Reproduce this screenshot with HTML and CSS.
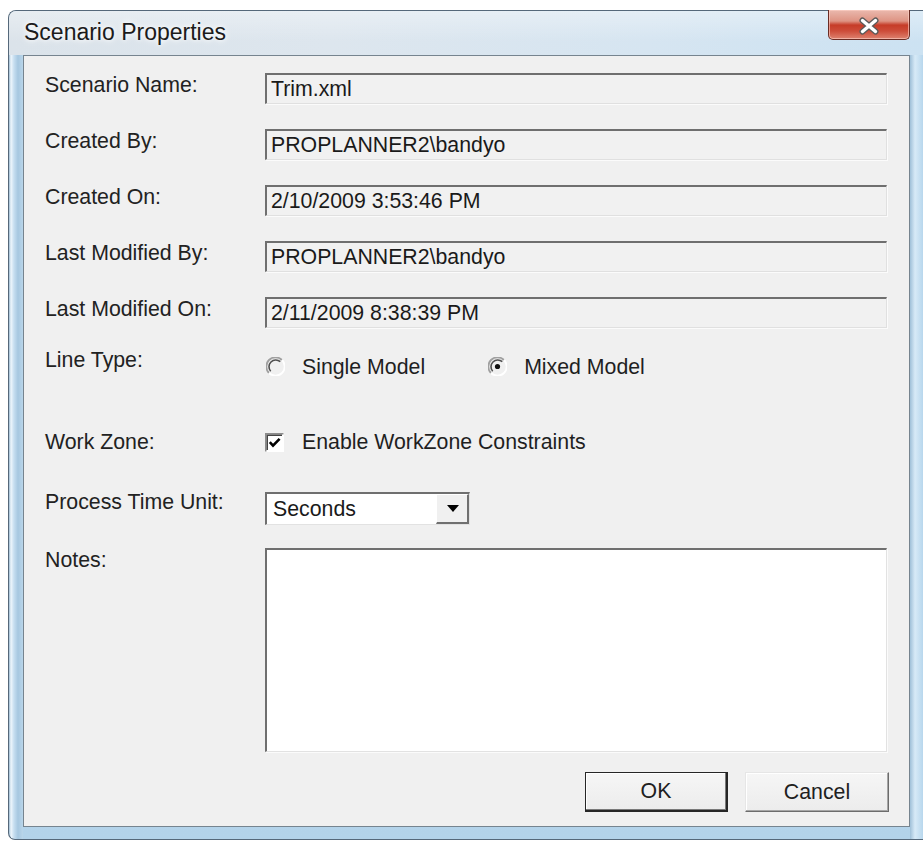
FILE: index.html
```html
<!DOCTYPE html>
<html lang="en">
<head>
<meta charset="utf-8">
<title>Scenario Properties</title>
<link rel="stylesheet" href="styles.css">
</head>
<body>
<div class="window">
  <div class="titlebar">
    <span class="title">Scenario Properties</span>
    <button class="close" type="button" aria-label="Close">
      <svg width="26" height="18" viewBox="0 0 26 18">
        <path d="M6.5 3.5 L19.5 14.5 M19.5 3.5 L6.5 14.5" stroke="#5a5a5a" stroke-width="6" stroke-linecap="round" fill="none"/>
        <path d="M6.5 3.5 L19.5 14.5 M19.5 3.5 L6.5 14.5" stroke="#ffffff" stroke-width="3.4" stroke-linecap="round" fill="none"/>
      </svg>
    </button>
  </div>

  <div class="client">
    <form class="form">
      <div class="row">
        <label class="label" for="f-name">Scenario Name:</label>
        <input class="field" id="f-name" readonly value="Trim.xml">
      </div>
      <div class="row">
        <label class="label" for="f-created-by">Created By:</label>
        <input class="field" id="f-created-by" readonly value="PROPLANNER2\bandyo">
      </div>
      <div class="row">
        <label class="label" for="f-created-on">Created On:</label>
        <input class="field" id="f-created-on" readonly value="2/10/2009 3:53:46 PM">
      </div>
      <div class="row">
        <label class="label" for="f-mod-by">Last Modified By:</label>
        <input class="field" id="f-mod-by" readonly value="PROPLANNER2\bandyo">
      </div>
      <div class="row">
        <label class="label" for="f-mod-on">Last Modified On:</label>
        <input class="field" id="f-mod-on" readonly value="2/11/2009 8:38:39 PM">
      </div>

      <div class="row row-line">
        <span class="label">Line Type:</span>
        <div class="radios">
          <span class="radio">
            <svg class="radio-mark" width="19" height="19" viewBox="0 0 19 19">
              <path d="M16 3 A9 9 0 0 0 3 16" stroke="#a0a0a0" stroke-width="1.8" fill="none"/>
              <path d="M14.3 4.7 A6.8 6.8 0 0 0 4.7 14.3" stroke="#505050" stroke-width="1.6" fill="none"/>
              <path d="M3 16 A9 9 0 0 0 16 3" stroke="#ffffff" stroke-width="1.8" fill="none"/>
            </svg>
            Single Model
          </span>
          <span class="radio">
            <svg class="radio-mark" width="19" height="19" viewBox="0 0 19 19">
              <path d="M16 3 A9 9 0 0 0 3 16" stroke="#a0a0a0" stroke-width="1.8" fill="none"/>
              <path d="M14.3 4.7 A6.8 6.8 0 0 0 4.7 14.3" stroke="#505050" stroke-width="1.6" fill="none"/>
              <path d="M3 16 A9 9 0 0 0 16 3" stroke="#ffffff" stroke-width="1.8" fill="none"/>
              <circle cx="9.5" cy="9.5" r="2.6" fill="#111111"/>
            </svg>
            Mixed Model
          </span>
        </div>
      </div>

      <div class="row row-zone">
        <span class="label">Work Zone:</span>
        <span class="check">
          <svg class="check-mark" width="19" height="19" viewBox="0 0 19 19">
            <rect width="19" height="19" fill="#ffffff"/>
            <path d="M0.75 18.5 V0.75 H18.5" stroke="#8c8c8c" stroke-width="1.5" fill="none"/>
            <path d="M2.25 17 V2.25 H17" stroke="#444444" stroke-width="1.5" fill="none"/>
            <path d="M4.8 9.2 L8 12.6 L14.6 5.8" stroke="#000000" stroke-width="2.6" fill="none"/>
          </svg>
          Enable WorkZone Constraints
        </span>
      </div>

      <div class="row row-unit">
        <span class="label">Process Time Unit:</span>
        <div class="select">
          <span class="select-value">Seconds</span>
          <span class="select-button">
            <svg width="12" height="7" viewBox="0 0 12 7"><path d="M0 0 H12 L6 7 Z" fill="#000000"/></svg>
          </span>
        </div>
      </div>

      <div class="row row-notes">
        <label class="label" for="f-notes">Notes:</label>
        <textarea class="notes" id="f-notes"></textarea>
      </div>
    </form>

    <div class="buttons">
      <button class="btn btn-default" type="button">OK</button>
      <button class="btn" type="button">Cancel</button>
    </div>
  </div>
</div>
</body>
</html>
```

FILE: styles.css
```css
html, body {
  margin: 0;
  padding: 0;
  background: #ffffff;
  overflow: hidden;
}

body {
  font-family: "Liberation Sans", Arial, sans-serif;
  font-size: 21.3px;
  color: #1f1f1f;
}

/* window frame (glass) */
.window {
  box-sizing: border-box;
  width: 915px;
  height: 830px;
  margin: 10px 0 0 8px;
  border: 1px solid #55687a;
  border-right: none;
  border-radius: 8px 0 0 7px;
  display: flex;
  flex-direction: column;
  background:
    linear-gradient(to right, #9dbcd3 0, #eef6fc 2px, #c6def0 5px, #a6c7e0 9px, #bad6ea 14px) left top / 14px 100% no-repeat,
    linear-gradient(to right, #9fc0d8 0, #d7eaf7 5px, #b8d7ed 13px) right top / 13px 100% no-repeat,
    linear-gradient(to bottom, #c4def0, #b3d3ea);
}

.titlebar {
  height: 44px;
  flex: none;
  display: flex;
  align-items: flex-start;
  border-radius: 7px 0 0 0;
  background:
    linear-gradient(to bottom, rgba(255, 255, 255, 0.35), rgba(255, 255, 255, 0) 70%),
    linear-gradient(to right, #dbe3ea 0, #dde6ee 35%, #d6e5f1 70%, #cce2f2 100%);
}

.title {
  padding: 8px 0 0 15px;
  font-size: 23px;
  line-height: 27px;
  color: #1b1b1b;
  text-shadow: 0 0 8px #ffffff, 0 0 4px #ffffff;
}

.close {
  margin: -1px 13px 0 auto;
  width: 82px;
  height: 30px;
  padding: 0;
  border: 1px solid #6a2c24;
  border-top: none;
  border-radius: 0 0 5px 5px;
  display: flex;
  align-items: center;
  justify-content: center;
  background: linear-gradient(to bottom, #eab9ae 0, #de9484 38%, #c63c28 52%, #cd4c39 72%, #de826f 100%);
  box-shadow: inset 0 0 0 1px rgba(255, 210, 200, 0.6);
}

.close svg {
  display: block;
  margin-top: 2px;
}

/* dialog client area */
.client {
  flex: 1;
  margin: 0 13px 12px 14px;
  border: 1px solid #76848f;
  background: #f0f0f0;
  padding: 17px 22px 0 21px;
  display: flex;
  flex-direction: column;
}

.form {
  display: flex;
  flex-direction: column;
  margin: 0;
}

.row {
  display: grid;
  grid-template-columns: 220px 1fr;
  align-items: start;
}

.row + .row {
  margin-top: 25px;
}

.label {
  line-height: 25px;
  white-space: nowrap;
  color: #222222;
}

.field {
  box-sizing: border-box;
  width: 100%;
  height: 31px;
  margin: 0;
  padding: 0 0 0 4px;
  font: inherit;
  line-height: 27px;
  color: #1a1a1a;
  background: #f1f1f1;
  border-style: solid;
  border-width: 2px 1px 1px 2px;
  border-color: #6f6f6f #e0e0e0 #e0e0e0 #6f6f6f;
  box-shadow: 1px 1px 0 #fbfbfb;
  outline: none;
}

.row-line { margin-top: 20px !important; }
.row-zone { margin-top: 50px !important; }
.row-unit { margin-top: 35px !important; }
.row-notes { margin-top: 23px !important; }

.radios {
  display: flex;
  padding-top: 7px;
  line-height: 25px;
  gap: 62px;
}

.radio {
  display: inline-flex;
  align-items: center;
  gap: 17px;
  white-space: nowrap;
  margin-left: 1px;
}

.radio-mark {
  display: block;
  flex: none;
  margin-top: -3px;
}

.check {
  display: inline-flex;
  align-items: center;
  gap: 18px;
  line-height: 25px;
  white-space: nowrap;
}

.check-mark {
  display: block;
  flex: none;
  margin-top: -1px;
}

.select {
  box-sizing: border-box;
  width: 205px;
  height: 33px;
  margin-top: 2px;
  display: flex;
  background: #ffffff;
  border-style: solid;
  border-width: 2px 1px 1px 2px;
  border-color: #6f6f6f #e2e2e2 #e2e2e2 #6f6f6f;
}

.select-value {
  flex: 1;
  padding: 1px 0 0 6px;
  line-height: 28px;
  color: #1a1a1a;
}

.select-button {
  box-sizing: border-box;
  width: 33px;
  display: flex;
  align-items: center;
  justify-content: center;
  background: #f0f0f0;
  border-style: solid;
  border-width: 1px 2px 2px 1px;
  border-color: #ffffff #707070 #707070 #ffffff;
}

.select-button svg {
  display: block;
  margin-left: 1px;
}

.notes {
  box-sizing: border-box;
  display: block;
  width: 100%;
  height: 204px;
  margin: 0;
  padding: 2px 4px;
  font: inherit;
  resize: none;
  outline: none;
  background: #ffffff;
  border-style: solid;
  border-width: 2px 1px 1px 2px;
  border-color: #6f6f6f #e2e2e2 #e2e2e2 #6f6f6f;
  box-shadow: 1px 1px 0 #fbfbfb;
}

/* dialog buttons */
.buttons {
  display: flex;
  justify-content: flex-end;
  gap: 17px;
  margin: 20px -2px 0 0;
}

.btn {
  box-sizing: border-box;
  width: 144px;
  height: 40px;
  padding: 0;
  font: inherit;
  color: #202020;
  background: linear-gradient(to bottom, #f6f6f6, #ececec);
  border: 1px solid;
  border-color: #e6e6e6 #6c6c6c #6c6c6c #e6e6e6;
  box-shadow: inset -1px -1px 0 #a6a6a6, inset 1px 1px 0 #ffffff;
}

.btn-default {
  width: 143px;
  border: 2px solid #262626;
  border-top-width: 1px;
  border-left-width: 1px;
  box-shadow: inset -1px -1px 0 #7a7a7a, inset 1px 1px 0 #ffffff;
}
```
